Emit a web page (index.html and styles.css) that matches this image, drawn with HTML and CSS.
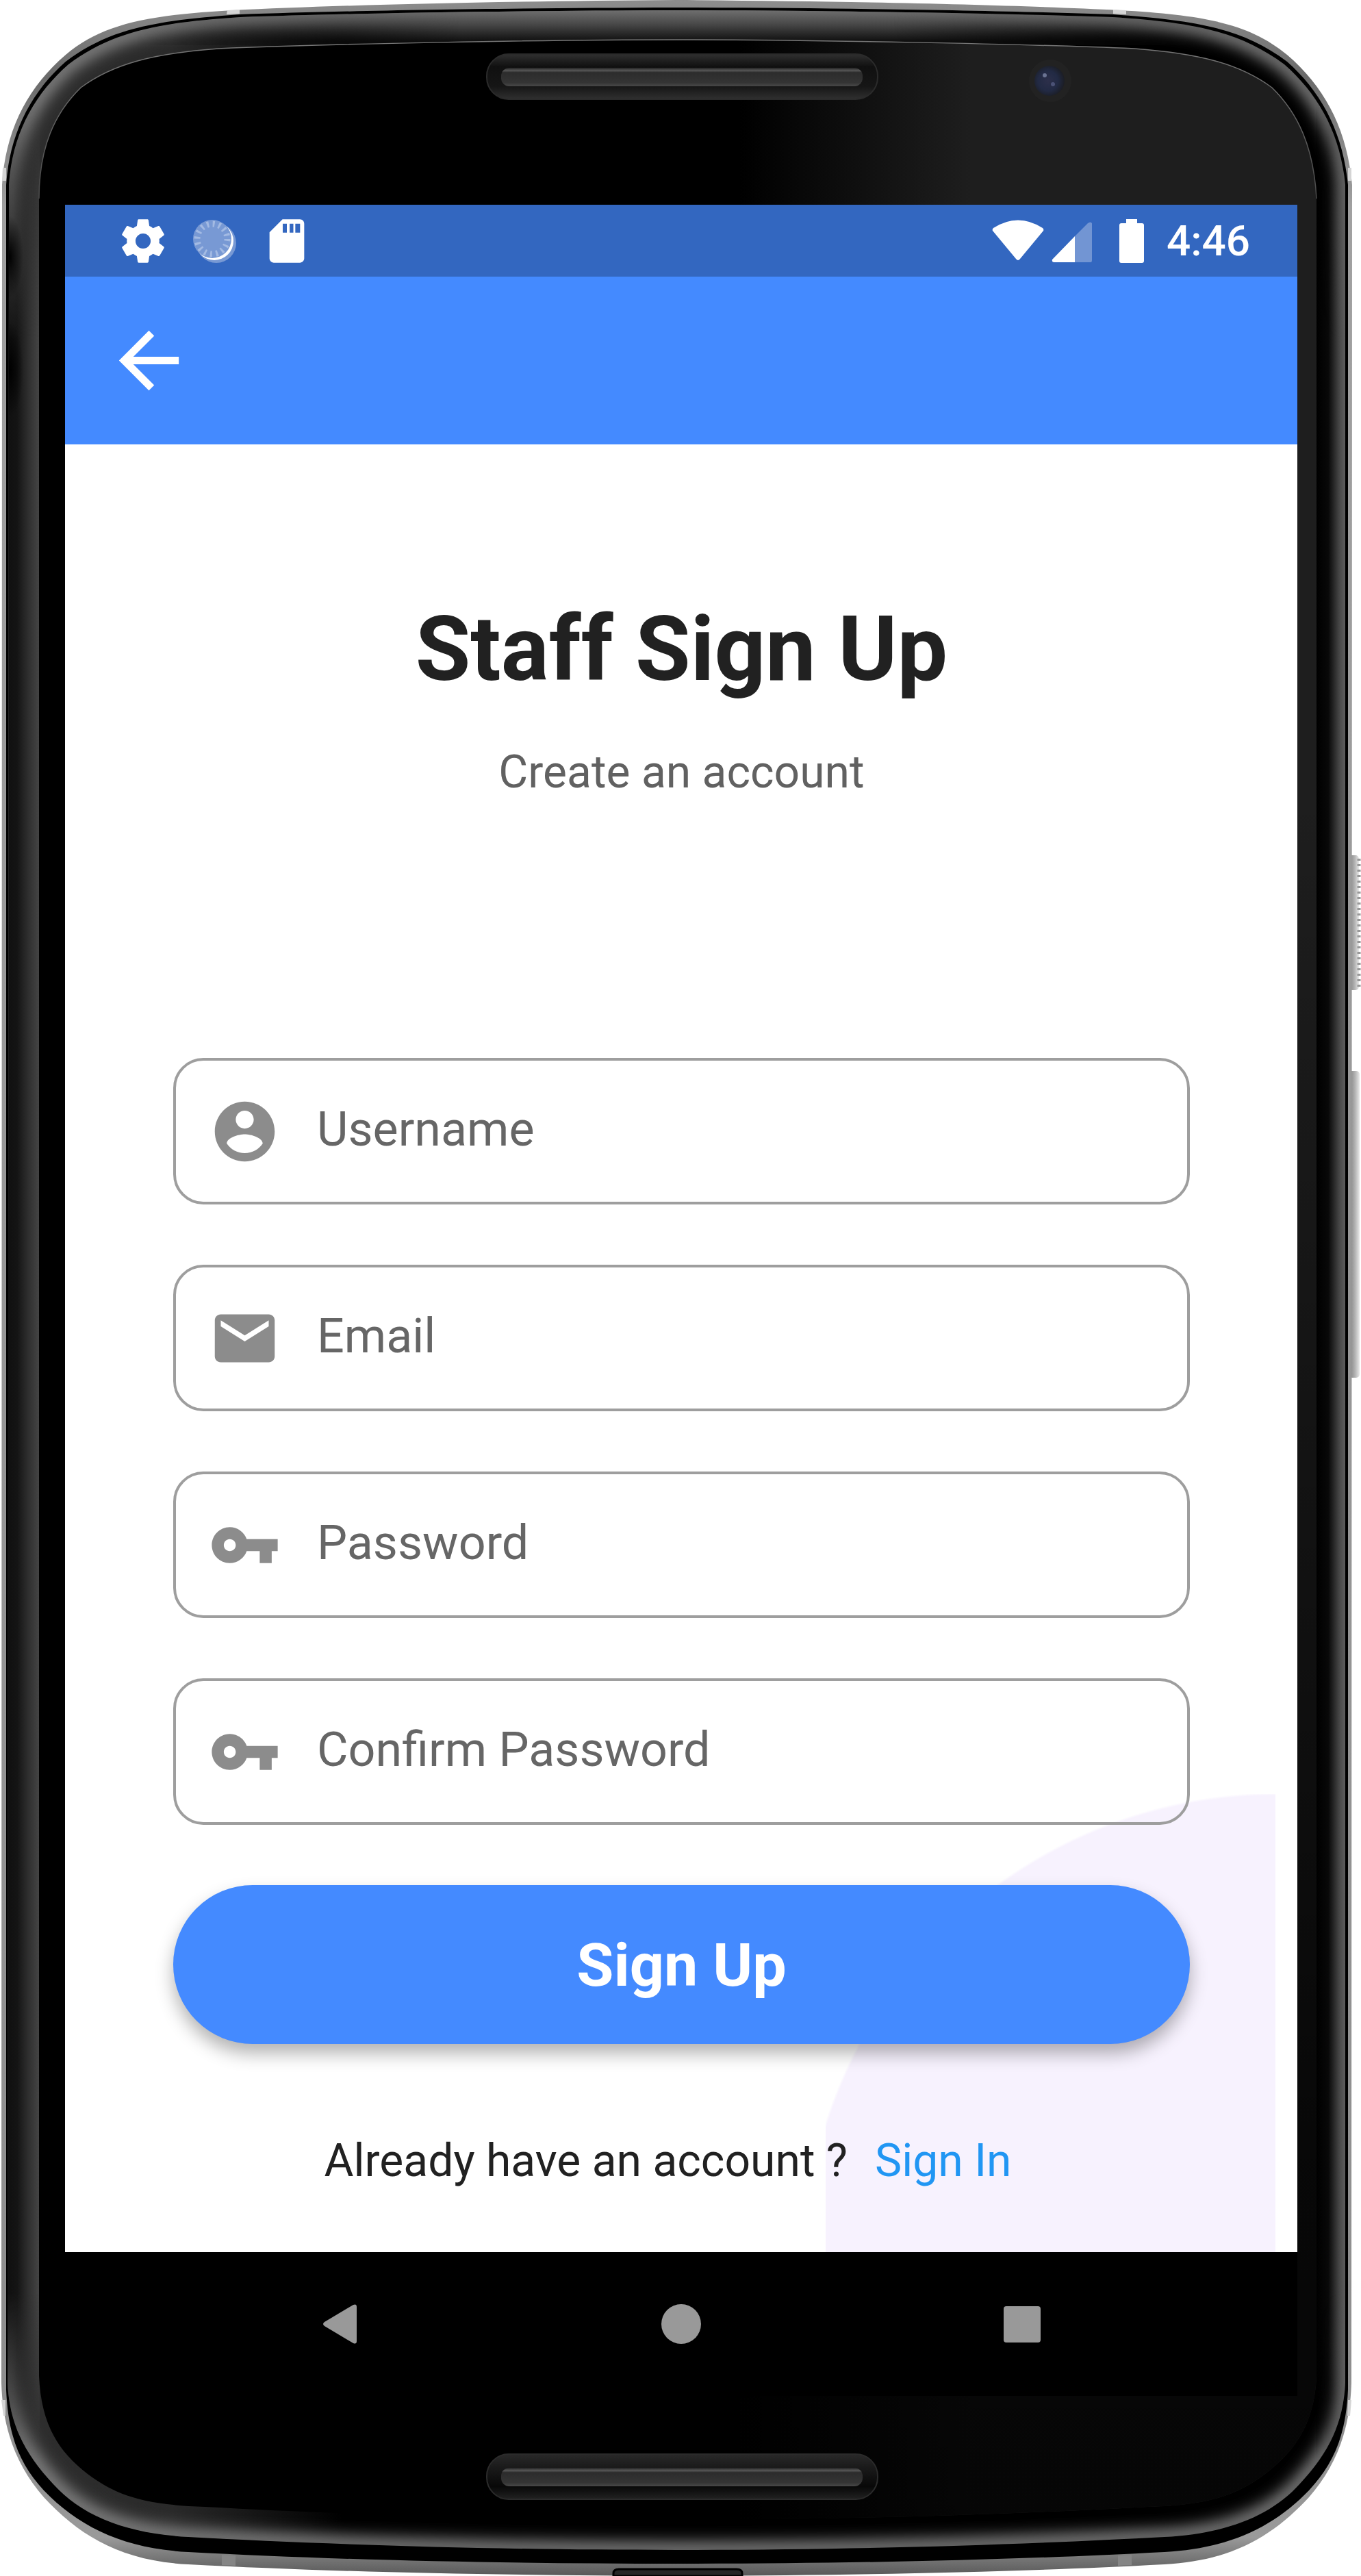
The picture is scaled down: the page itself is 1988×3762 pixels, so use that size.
FILE: index.html
```
<!DOCTYPE html>
<html lang="en">
<head>
<meta charset="utf-8">
<meta name="viewport" content="width=device-width, initial-scale=1">
<title>Staff Sign Up</title>
<link rel="stylesheet" href="styles.css">
</head>
<body>
<div class="phone">
  <svg class="phone-frame" viewBox="0 0 1988 3762" preserveAspectRatio="none" aria-hidden="true">
    <defs>
      <path id="bevel" d="M988 15C700 16 500 20 351 25C230 33 165 46 100 94C50 138 18 195 13 270L11 3480C14 3545 40 3587 77 3627C120 3675 185 3700 275 3705C480 3716 720 3724 988 3724C1256 3724 1496 3716 1701 3705C1791 3700 1856 3675 1899 3627C1936 3587 1962 3545 1965 3480L1965 270C1958 195 1926 138 1876 94C1811 46 1746 33 1625 25C1476 20 1276 16 988 15Z"/>
      <path id="glass" d="M988 58C800 58 480 64 319 71C225 78 165 93 118 128C80 165 57 215 57 290V3470C60 3540 85 3580 128 3613C165 3640 200 3658 300 3661C500 3672 750 3680 988 3680C1226 3680 1476 3672 1676 3661C1776 3658 1811 3640 1848 3613C1891 3580 1920 3540 1923 3470V290C1919 215 1896 165 1858 128C1811 93 1751 78 1657 71C1496 64 1176 58 988 58Z"/>
      <clipPath id="bevel-clip"><use href="#bevel"/></clipPath>
      <clipPath id="glass-clip"><use href="#glass"/></clipPath>
      <filter id="soft" x="-5%" y="-5%" width="110%" height="110%"><feGaussianBlur stdDeviation="11"/></filter>
      <linearGradient id="rim" x1="0" y1="0" x2="0" y2="1">
        <stop offset="0" stop-color="#8d8d8d"/><stop offset=".03" stop-color="#6a6a6a"/><stop offset=".08" stop-color="#a0a0a0"/>
        <stop offset=".94" stop-color="#8e8e8e"/><stop offset=".985" stop-color="#9a9a9a"/><stop offset="1" stop-color="#585858"/>
      </linearGradient>
      <linearGradient id="left-edge" gradientUnits="userSpaceOnUse" x1="11" y1="0" x2="58" y2="0">
        <stop offset="0" stop-color="#101010"/><stop offset=".3" stop-color="#141414"/><stop offset=".65" stop-color="#2f2f2f"/><stop offset="1" stop-color="#464646"/>
      </linearGradient>
      <linearGradient id="right-edge" gradientUnits="userSpaceOnUse" x1="1923" y1="0" x2="1966" y2="0">
        <stop offset="0" stop-color="#000"/><stop offset=".4" stop-color="#080808"/><stop offset=".8" stop-color="#4a4a4a"/><stop offset="1" stop-color="#606060"/>
      </linearGradient>
      <linearGradient id="edge-fade" x1="0" y1="0" x2="0" y2="1">
        <stop offset="0" stop-color="#000"/><stop offset=".1" stop-color="#fff"/><stop offset=".93" stop-color="#fff"/><stop offset="1" stop-color="#000"/>
      </linearGradient>
      <mask id="edge-mask" maskUnits="userSpaceOnUse" x="0" y="150" width="1988" height="3440"><rect y="150" width="1988" height="3440" fill="url(#edge-fade)"/></mask>
      <linearGradient id="top-fade" x1="0" y1="0" x2="1" y2="0">
        <stop offset="0" stop-color="#000"/><stop offset=".3" stop-color="#fff"/><stop offset=".7" stop-color="#fff"/><stop offset="1" stop-color="#000"/>
      </linearGradient>
      <mask id="top-mask" maskUnits="userSpaceOnUse" x="200" y="0" width="1576" height="100"><rect x="200" width="1576" height="100" fill="url(#top-fade)"/></mask>
      <linearGradient id="corner" gradientUnits="userSpaceOnUse" x1="0" y1="0" x2="500" y2="0">
        <stop offset="0" stop-color="#2e2e2e"/><stop offset=".5" stop-color="#2a2a2a"/><stop offset="1" stop-color="#000"/>
      </linearGradient>
      <linearGradient id="top-edge" gradientUnits="userSpaceOnUse" x1="0" y1="15" x2="0" y2="60">
        <stop offset="0" stop-color="#6f6f6f"/><stop offset=".45" stop-color="#484848"/><stop offset="1" stop-color="#101010"/>
      </linearGradient>
      <linearGradient id="sheen" gradientUnits="userSpaceOnUse" x1="1080" y1="0" x2="1420" y2="0">
        <stop offset="0" stop-color="#1e1e1e" stop-opacity="0"/><stop offset="1" stop-color="#1e1e1e"/>
      </linearGradient>
      <linearGradient id="sheen-fade" x1="0" y1="0" x2="0" y2="1">
        <stop offset="0" stop-color="#000" stop-opacity="0"/><stop offset=".3" stop-color="#000" stop-opacity="0"/><stop offset=".85" stop-color="#000" stop-opacity=".75"/><stop offset="1" stop-color="#000" stop-opacity=".8"/>
      </linearGradient>
      <linearGradient id="top-line" gradientUnits="userSpaceOnUse" x1="0" y1="58" x2="0" y2="300">
        <stop offset="0" stop-color="#777"/><stop offset="1" stop-color="#484848"/>
      </linearGradient>
      <radialGradient id="dark-spot">
        <stop offset="0" stop-color="#000"/><stop offset="1" stop-color="#000" stop-opacity="0"/>
      </radialGradient>
      <linearGradient id="slot" x1="0" y1="0" x2="0" y2="1">
        <stop offset="0" stop-color="#303030"/><stop offset=".28" stop-color="#101010"/><stop offset=".72" stop-color="#161616"/><stop offset="1" stop-color="#303030"/>
      </linearGradient>
      <linearGradient id="slot-bottom" x1="0" y1="0" x2="0" y2="1">
        <stop offset="0" stop-color="#292929"/><stop offset=".3" stop-color="#1a1a1a"/><stop offset=".72" stop-color="#080808"/><stop offset="1" stop-color="#222"/>
      </linearGradient>
      <linearGradient id="bar" x1="0" y1="0" x2="0" y2="1">
        <stop offset="0" stop-color="#222"/><stop offset=".15" stop-color="#585858"/><stop offset=".25" stop-color="#2c2c2c"/><stop offset=".8" stop-color="#343434"/><stop offset="1" stop-color="#484848"/>
      </linearGradient>
      <radialGradient id="lens" cx=".45" cy=".5" r=".55">
        <stop offset="0" stop-color="#2c2f4a"/><stop offset=".6" stop-color="#222a44"/><stop offset="1" stop-color="#1b1d24"/>
      </radialGradient>
      <linearGradient id="key" x1="0" y1="0" x2="1" y2="0">
        <stop offset="0" stop-color="#777"/><stop offset=".6" stop-color="#b5b5b5"/><stop offset="1" stop-color="#e8e8e8"/>
      </linearGradient>
    </defs>
    <rect x="1970" y="1249" width="15" height="197" rx="5" fill="url(#key)"/>
    <path d="M1985 1254V1441" fill="none" stroke="#999" stroke-width="5" stroke-dasharray="3 5"/>
    <rect x="1970" y="1564" width="16" height="448" rx="5" fill="url(#key)"/>
    <path fill="url(#rim)" d="M988 0C700 2 480 8 340 15C215 22 150 35 96 80C40 128 8 190 3 270L2 3480C4 3550 25 3602 64 3647C115 3702 175 3740 275 3745C480 3756 720 3761 988 3762C1256 3761 1496 3756 1701 3745C1801 3740 1861 3702 1912 3647C1951 3602 1972 3550 1974 3480L1975 270C1968 190 1936 128 1880 80C1826 35 1761 22 1636 15C1496 8 1276 2 988 0Z"/>
    <path fill="#d4d4d4" d="M332 15L350 14V20L331 21ZM1626 14L1645 15V21L1626 20ZM4 245H9V264H3ZM1969 245H1974V264H1969ZM2 3505H8V3528H5ZM1969 3505H1974L1972 3528H1968Z"/>
    <path fill="#858585" d="M324 3731L344 3732V3747L324 3746ZM1633 3732L1653 3731V3746L1633 3747Z"/>
    <path fill="#000" d="M988 11C700 12 500 16 351 21C225 30 160 42 96 90C45 135 14 195 9 270V3490C12 3560 30 3600 64 3637C115 3690 180 3722 275 3727C480 3738 720 3744 988 3744C1256 3744 1496 3738 1701 3727C1796 3722 1861 3690 1912 3637C1946 3600 1966 3560 1969 3490V270C1962 195 1931 135 1880 90C1816 42 1751 30 1625 21C1476 16 1276 12 988 11Z"/>
    <g clip-path="url(#bevel-clip)">
      <use href="#bevel" fill="url(#corner)"/>
      <use href="#bevel" fill="none" stroke="#8a8a8a" stroke-width="22" filter="url(#soft)"/>
      <rect x="200" y="10" width="1576" height="56" fill="url(#top-edge)" mask="url(#top-mask)"/>
      <g mask="url(#edge-mask)">
        <rect x="9" y="150" width="49" height="3440" fill="url(#left-edge)"/>
        <rect x="1922" y="150" width="45" height="3440" fill="url(#right-edge)"/>
      </g>
      <ellipse cx="14" cy="375" rx="20" ry="60" fill="url(#dark-spot)"/>
      <ellipse cx="14" cy="540" rx="20" ry="70" fill="url(#dark-spot)"/>
    </g>
    <use href="#glass" fill="#000"/>
    <g clip-path="url(#glass-clip)">
      <rect x="1060" y="50" width="880" height="3650" fill="url(#sheen)"/>
      <rect x="1060" y="50" width="880" height="3650" fill="url(#sheen-fade)"/>
    </g>
    <path d="M57 290C57 215 80 165 118 128C165 93 225 78 319 71C480 64 800 58 988 58C1176 58 1496 64 1657 71C1751 78 1811 93 1858 128C1896 165 1919 215 1923 290" fill="none" stroke="url(#top-line)" stroke-width="1.500"/>
    <rect x="711" y="79" width="571" height="66" rx="32" fill="url(#slot)" stroke="#2b2b2b" stroke-width="2"/>
    <rect x="732" y="99" width="528" height="27" rx="12" fill="url(#bar)"/>
    <circle cx="1534" cy="118" r="31" fill="#222"/>
    <circle cx="1533" cy="118" r="22" fill="url(#lens)"/>
    <circle cx="1526" cy="110" r="3" fill="#6a7392"/>
    <circle cx="1538" cy="123" r="3" fill="#4b5276"/>
    <rect x="711" y="3584" width="571" height="66" rx="32" fill="url(#slot-bottom)" stroke="#2b2b2b" stroke-width="2"/>
    <rect x="732" y="3604" width="528" height="27" rx="12" fill="url(#bar)"/>
    <path fill="#262626" stroke="#000" stroke-width="3" d="M896 3762V3758Q896 3752 904 3752H1076Q1084 3752 1084 3758V3762Z"/>
  </svg>

  <div class="screen">
    <header class="status-bar">
      <div class="status-left">
        <svg class="status-icon" viewBox="0 0 24 24" aria-hidden="true"><path fill="#fff" d="M19.43 12.98c.04-.32.07-.64.07-.98s-.03-.66-.07-.98l2.11-1.65c.19-.15.24-.42.12-.64l-2-3.46c-.12-.22-.39-.3-.61-.22l-2.49 1c-.52-.4-1.08-.73-1.69-.98l-.38-2.65C14.46 2.18 14.25 2 14 2h-4c-.25 0-.46.18-.49.42l-.38 2.65c-.61.25-1.17.59-1.69.98l-2.49-1c-.23-.09-.49 0-.61.22l-2 3.46c-.13.22-.07.49.12.64l2.11 1.65c-.04.32-.07.65-.07.98s.03.66.07.98l-2.11 1.65c-.19.15-.24.42-.12.64l2 3.46c.12.22.39.3.61.22l2.49-1c.52.4 1.08.73 1.69.98l.38 2.65c.03.24.24.42.49.42h4c.25 0 .46-.18.49-.42l.38-2.65c.61-.25 1.17-.59 1.69-.98l2.49 1c.23.09.49 0 .61-.22l2-3.46c.12-.22.07-.49-.12-.64zM12 15.5c-1.93 0-3.5-1.57-3.5-3.5s1.57-3.5 3.5-3.5 3.5 1.57 3.5 3.5-1.57 3.5-3.5 3.5"/></svg>
        <svg class="status-icon" viewBox="0 0 76 76" aria-hidden="true">
          <circle cx="40" cy="41" r="29" fill="#7899d4"/>
          <circle cx="37" cy="38" r="28" fill="#fff"/>
          <circle cx="34" cy="35" r="28" fill="#7899d4"/>
          <circle cx="34" cy="35" r="22" fill="none" stroke="#a3bae3" stroke-width="9" stroke-dasharray="3 5.64"/>
        </svg>
        <svg class="status-icon" viewBox="0 0 24 24" aria-hidden="true"><path fill="#fff" fill-rule="evenodd" d="M18 2H10L4 8v12c0 1.100.9 2 2 2h12c1.100 0 2-.9 2-2V4c0-1.100-.9-2-2-2M10.100 4H12V8.100h-1.900zm3.200 0H15V8.100h-1.700zm2.600 0h2.200V8.100h-2.200z"/></svg>
      </div>
      <div class="status-right">
        <svg class="wifi" viewBox="0 0 76 64" aria-hidden="true"><path fill="#fff" d="M2 13Q38-10 74 13Q76 15 75 17L41 58Q38 62 35 58L1 17Q0 15 2 13"/></svg>
        <svg class="signal" viewBox="0 0 60 64" aria-hidden="true"><path fill="#7295d3" d="M34 25L53 6Q57 3 59 6V60Q59 63 57 63H34Z"/><path fill="#fff" d="M34 25V63H4Q0 63 1 59Z"/></svg>
        <svg class="battery" viewBox="0 0 36 64" aria-hidden="true"><path fill="#fff" d="M10 0H26V6H33Q36 6 36 9V61Q36 64 33 64H3Q0 64 0 61V9Q0 6 3 6H10Z"/></svg>
        <time class="clock">4:46</time>
      </div>
    </header>

    <nav class="app-bar">
      <button class="back" type="button" aria-label="Back">
        <svg viewBox="0 0 24 24" aria-hidden="true"><path fill="#fff" d="M20 11H7.830l5.590-5.590L12 4l-8 8 8 8 1.410-1.410L7.830 13H20z"/></svg>
      </button>
    </nav>

    <main class="content">
      <div class="blob"></div>
      <h1 class="title">Staff Sign Up</h1>
      <p class="subtitle">Create an account</p>
      <form class="form">
        <label class="field" for="username">
          <svg viewBox="0 0 24 24" aria-hidden="true"><path d="M12 2C6.480 2 2 6.480 2 12s4.480 10 10 10 10-4.480 10-10S17.520 2 12 2m0 3c1.660 0 3 1.340 3 3s-1.340 3-3 3-3-1.340-3-3 1.340-3 3-3m0 14.200c-2.500 0-4.710-1.280-6-3.220.03-1.990 4-3.080 6-3.080 1.990 0 5.970 1.090 6 3.080-1.290 1.940-3.500 3.220-6 3.220"/></svg>
          <input id="username" type="text" placeholder="Username" aria-label="Username">
        </label>
        <label class="field" for="email">
          <svg viewBox="0 0 24 24" aria-hidden="true"><path d="M20 4H4c-1.100 0-1.990.9-1.990 2L2 18c0 1.100.9 2 2 2h16c1.100 0 2-.9 2-2V6c0-1.100-.9-2-2-2m0 4-8 5-8-5V6l8 5 8-5z"/></svg>
          <input id="email" type="email" placeholder="Email" aria-label="Email">
        </label>
        <label class="field" for="password">
          <svg viewBox="0 0 24 24" aria-hidden="true"><path d="M12.650 10C11.830 7.670 9.610 6 7 6c-3.310 0-6 2.690-6 6s2.690 6 6 6c2.610 0 4.830-1.670 5.650-4H17v4h4v-4h2v-4zM7 14c-1.100 0-2-.9-2-2s.9-2 2-2 2 .9 2 2-.9 2-2 2"/></svg>
          <input id="password" type="password" placeholder="Password" aria-label="Password">
        </label>
        <label class="field" for="confirm">
          <svg viewBox="0 0 24 24" aria-hidden="true"><path d="M12.650 10C11.830 7.670 9.610 6 7 6c-3.310 0-6 2.690-6 6s2.690 6 6 6c2.610 0 4.830-1.670 5.650-4H17v4h4v-4h2v-4zM7 14c-1.100 0-2-.9-2-2s.9-2 2-2 2 .9 2 2-.9 2-2 2"/></svg>
          <input id="confirm" type="password" placeholder="Confirm Password" aria-label="Confirm Password">
        </label>
        <button class="submit" type="submit">Sign Up</button>
      </form>
      <p class="signin"><span>Already have an account ?</span><a href="#signin">Sign In</a></p>
    </main>

    <footer class="nav-bar">
      <button type="button" aria-label="Back"><svg viewBox="0 0 58 58" aria-hidden="true"><path d="M6 26L48 1Q53-1 53 4V54Q53 59 48 57L6 32Q2 29 6 26"/></svg></button>
      <button type="button" aria-label="Home"><svg viewBox="0 0 58 58" aria-hidden="true"><circle cx="29" cy="29" r="29"/></svg></button>
      <button type="button" aria-label="Overview"><svg viewBox="0 0 58 58" aria-hidden="true"><rect x="2" y="3" width="54" height="53" rx="4"/></svg></button>
    </footer>
  </div>
</div>
</body>
</html>
```
FILE: styles.css
```
* {
  box-sizing: border-box;
}

body {
  margin: 0;
  background: #fff;
  color: #212121;
  font-family: Roboto, "Liberation Sans", sans-serif;
}

h1,
p {
  margin: 0;
}

button {
  padding: 0;
  border: 0;
  background: none;
  font: inherit;
  cursor: pointer;
}

svg {
  display: block;
}

.phone {
  position: relative;
  padding: 299px 93px 263px 95px;
}

.phone-frame {
  position: absolute;
  inset: 0;
  width: 100%;
  height: 100%;
}

.screen {
  position: relative;
  display: flex;
  flex-direction: column;
  background: #fff;
}

/* Status bar */
.status-bar {
  display: flex;
  justify-content: space-between;
  align-items: center;
  height: 105px;
  padding: 0 69px 0 76px;
  background: #3367c0;
}

.status-left {
  display: flex;
  gap: 29px;
}

.status-icon {
  width: 76px;
  height: 76px;
}

.status-right {
  display: flex;
  align-items: center;
}

.wifi {
  width: 76px;
  height: 64px;
  margin-right: 11px;
}

.signal {
  width: 60px;
  height: 64px;
  margin-right: 39px;
}

.battery {
  width: 36px;
  height: 64px;
  margin-right: 33px;
}

.clock {
  color: #fff;
  font-size: 62px;
  font-weight: 500;
  line-height: 72px;
}

/* App bar */
.app-bar {
  display: flex;
  align-items: center;
  height: 245px;
  padding: 0 57px;
  background: #448aff;
}

.back svg {
  width: 131px;
  height: 131px;
}

/* Sign-up page */
.content {
  position: relative;
  padding: 222px 157px 95px 158px;
}

.blob {
  position: absolute;
  right: 32px;
  bottom: 0;
  width: 657px;
  height: 669px;
  background: radial-gradient(circle at 659px 691px, #f7f2fe 689px, transparent 693px);
}

.title {
  position: relative;
  font-size: 131px;
  font-weight: 700;
  line-height: 154px;
  text-align: center;
}

.subtitle {
  position: relative;
  margin-top: 64px;
  color: #616161;
  font-size: 66px;
  line-height: 77px;
  text-align: center;
}

.form {
  position: relative;
  display: flex;
  flex-direction: column;
  gap: 88px;
  margin-top: 379px;
}

.field {
  display: flex;
  align-items: center;
  gap: 53px;
  height: 214px;
  padding: 0 48px;
  border: 4px solid #9e9e9e;
  border-radius: 44px;
}

.field svg {
  flex: none;
  width: 105px;
  height: 105px;
  fill: #8c8c8c;
}

.field input {
  flex: 1;
  min-width: 0;
  height: 100%;
  padding: 0 0 6px;
  border: 0;
  outline: 0;
  background: none;
  color: #212121;
  font: inherit;
  font-size: 70px;
}

.field input::placeholder {
  color: #666;
  opacity: 1;
}

.submit {
  height: 232px;
  border-radius: 116px;
  background: #448aff;
  box-shadow: 0 14px 26px rgba(0, 0, 0, 0.3);
  color: #fff;
  font-size: 88px;
  font-weight: 700;
}

.signin {
  position: relative;
  display: flex;
  justify-content: center;
  margin-top: 132px;
  font-size: 66px;
  line-height: 77px;
}

.signin a {
  padding: 0 40px;
  color: #2196f3;
  text-decoration: none;
}

/* System navigation */
.nav-bar {
  display: flex;
  justify-content: center;
  align-items: center;
  gap: 440px;
  height: 210px;
  background: #000;
}

.nav-bar svg {
  width: 58px;
  height: 58px;
  fill: #999;
}
```
